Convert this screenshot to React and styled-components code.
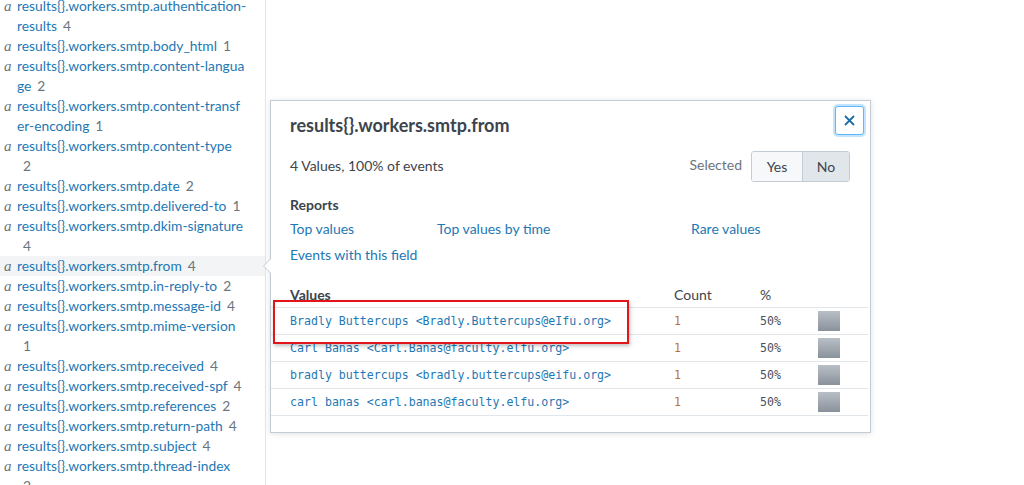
import React from 'react'
import styled, { createGlobalStyle } from 'styled-components'

const GlobalStyle = createGlobalStyle`
  html, body {
    margin: 0;
    padding: 0;
    background: #fff;
    font-family: Lato, 'Open Sans', sans-serif;
    color: #3c444d;
  }
`

const Page = styled.div`
  display: flex;
  height: 485px;
  overflow: hidden;
`

const Sidebar = styled.aside`
  width: 265px;
  flex: none;
  border-right: 1px solid #e1e6eb;
  overflow: hidden;
`

const FieldList = styled.ul`
  list-style: none;
  margin: -4px 0 0;
  padding: 0;
`

const FieldRow = styled.li`
  display: flex;
  padding-left: 4px;
  line-height: 20px;
  font-size: 13.8px;
  background: ${p => (p.$active ? '#f2f4f5' : 'transparent')};
`

const TypeIcon = styled.span`
  flex: none;
  width: 13px;
  font-family: 'Liberation Serif', serif;
  font-style: italic;
  font-size: 15px;
  color: #6b7580;
`

const FieldName = styled.span`
  width: 230px;
  word-break: break-all;
  color: #1e78b4;
`

const FieldCount = styled.span`
  display: inline-block;
  padding: 0 3px 0 6px;
  color: #6b7580;
  word-break: normal;
`

const Main = styled.main`
  flex: 1;
  padding: 100px 0 0 4px;
`

const Popover = styled.section`
  position: relative;
  width: 599px;
  padding-bottom: 16px;
  background: #fff;
  border: 1px solid #c3cbd4;
  box-shadow: 0 1px 6px rgba(0, 0, 0, 0.12);

  &::before,
  &::after {
    content: '';
    position: absolute;
    top: 157px;
    width: 0;
    height: 0;
    border-style: solid;
  }
  &::before {
    left: -8px;
    border-width: 8px 8px 8px 0;
    border-color: transparent #c3cbd4 transparent transparent;
  }
  &::after {
    left: -7px;
    border-width: 8px 8px 8px 0;
    border-color: transparent #fff transparent transparent;
  }
`

const Header = styled.header`
  display: flex;
  justify-content: space-between;
  align-items: flex-start;
  padding: 5px 6px 0 19px;
`

const Title = styled.h2`
  margin: 9px 0 0;
  font-size: 18px;
  line-height: 20px;
  font-weight: 700;
  color: #3c444d;
`

const CloseButton = styled.button`
  width: 29px;
  height: 29px;
  display: flex;
  align-items: center;
  justify-content: center;
  padding: 0;
  background: #fff;
  border: 1px solid #5fb8f5;
  border-radius: 3px;
  box-shadow: 0 0 0 2px rgba(120, 195, 255, 0.45);
  cursor: pointer;
`

const Stats = styled.div`
  display: flex;
  align-items: center;
  justify-content: space-between;
  margin-top: 16px;
  padding: 0 20px 0 19px;
  font-size: 14px;
  & > span {
    margin-top: -3px;
  }
`

const Selected = styled.div`
  display: flex;
  align-items: center;
  gap: 9px;
  color: #6b7580;
  & > span {
    margin-top: -4px;
  }
`

const Toggle = styled.div`
  display: flex;
  height: 29px;
  border: 1px solid #c3cbd4;
  border-radius: 3px;
  overflow: hidden;
`

const ToggleOption = styled.button`
  width: ${p => p.$w}px;
  border: 0;
  border-left: ${p => (p.$first ? '0' : '1px solid #c3cbd4')};
  padding: 0;
  font: inherit;
  font-size: 14px;
  color: #3c444d;
  background: ${p => (p.$on ? '#e1e6eb' : '#f7f8fa')};
`

const Reports = styled.div`
  margin-top: 14px;
  padding: 0 19px;
  font-size: 14px;
`

const Label = styled.div`
  font-weight: 700;
  line-height: 18px;
`

const LinkGrid = styled.div`
  display: grid;
  grid-template-columns: 147px 254px auto;
  grid-auto-rows: 26px;
  margin-top: 1px;
  align-items: center;
`

const Link = styled.a`
  color: #1e78b4;
  text-decoration: none;
`

const Table = styled.div`
  width: 597px;
  margin-top: 15px;
  font-size: 14px;
`

const Row = styled.div`
  display: grid;
  grid-template-columns: 403px 86px 58px 1fr;
  align-items: center;
  height: ${p => (p.$head ? 25 : 26)}px;
  border-bottom: 1px solid #e1e6eb;
  & > :first-child {
    padding-left: 19px;
  }
`

const HeadCell = styled.div`
  font-weight: ${p => (p.$bold ? 700 : 400)};
  color: #3c444d;
`

const Mono = styled.div`
  font-family: 'DejaVu Sans Mono', 'Liberation Mono', monospace;
  font-size: 11.6px;
  color: ${p => p.$color || '#4a525b'};
`

const Bar = styled.div`
  width: 22px;
  height: 20px;
  background: linear-gradient(#b9bfc7, #89919a);
`

const Highlight = styled.div`
  position: absolute;
  left: 2px;
  top: 199px;
  width: 352px;
  height: 40px;
  border: 2px solid #e4141b;
  box-shadow: 1px 2px 4px rgba(0, 0, 0, 0.25);
  pointer-events: none;
`

const fields = [
  ['authentication-results', 4],
  ['body_html', 1],
  ['content-language', 2],
  ['content-transfer-encoding', 1],
  ['content-type', 2],
  ['date', 2],
  ['delivered-to', 1],
  ['dkim-signature', 4],
  ['from', 4],
  ['in-reply-to', 2],
  ['message-id', 4],
  ['mime-version', 1],
  ['received', 4],
  ['received-spf', 4],
  ['references', 2],
  ['return-path', 4],
  ['subject', 4],
  ['thread-index', 2],
]

const values = [
  'Bradly Buttercups <Bradly.Buttercups@eIfu.org>',
  'Carl Banas <Carl.Banas@faculty.elfu.org>',
  'bradly buttercups <bradly.buttercups@eifu.org>',
  'carl banas <carl.banas@faculty.elfu.org>',
]

const App = () => {
  return (
    <Page>
      <GlobalStyle />
      <Sidebar>
        <FieldList>
          {fields.map(([name, count]) => (
            <FieldRow key={name} $active={name === 'from'}>
              <TypeIcon>a</TypeIcon>
              <FieldName>
                results{'{}'}.workers.smtp.{name}
                <FieldCount>{count}</FieldCount>
              </FieldName>
            </FieldRow>
          ))}
        </FieldList>
      </Sidebar>

      <Main>
        <Popover>
          <Header>
            <Title>results{'{}'}.workers.smtp.from</Title>
            <CloseButton aria-label="Close">
              <svg width="11" height="11" viewBox="0 0 11 11">
                <path d="M1 1L10 10M10 1L1 10" stroke="#1a6ea8" strokeWidth="1.8" />
              </svg>
            </CloseButton>
          </Header>

          <Stats>
            <span>4 Values, 100% of events</span>
            <Selected>
              <span>Selected</span>
              <Toggle>
                <ToggleOption $w={50} $first>Yes</ToggleOption>
                <ToggleOption $w={47} $on>No</ToggleOption>
              </Toggle>
            </Selected>
          </Stats>

          <Reports>
            <Label>Reports</Label>
            <LinkGrid>
              <Link href="#">Top values</Link>
              <Link href="#">Top values by time</Link>
              <Link href="#">Rare values</Link>
              <Link href="#">Events with this field</Link>
            </LinkGrid>
          </Reports>

          <Table>
            <Row $head>
              <HeadCell $bold>Values</HeadCell>
              <HeadCell>Count</HeadCell>
              <HeadCell>%</HeadCell>
              <div />
            </Row>
            {values.map(v => (
              <Row key={v}>
                <Mono $color="#1e78b4">{v}</Mono>
                <Mono $color="#c0712f">1</Mono>
                <Mono>50%</Mono>
                <Bar />
              </Row>
            ))}
          </Table>

          <Highlight />
        </Popover>
      </Main>
    </Page>
  )
}

export default App
